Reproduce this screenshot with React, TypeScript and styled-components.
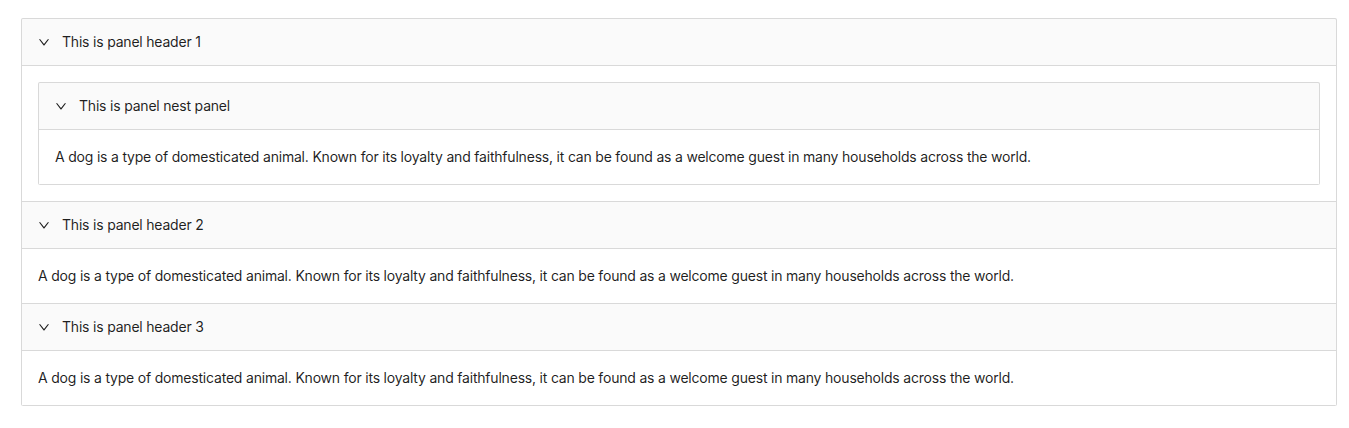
import React from "react";
import styled, { createGlobalStyle } from "styled-components";

const GlobalStyle = createGlobalStyle`
  html, body { margin: 0; padding: 0; background: #ffffff; }
  body {
    font-family: Inter, "Noto Sans", "Liberation Sans", sans-serif;
    font-size: 14px;
    line-height: 22px;
    letter-spacing: -0.2px;
    color: rgba(0, 0, 0, 0.88);
  }
`;

const Page = styled.div`
  padding: 18px 12px 0 21px;
`;

const Collapse = styled.div`
  border: 1px solid #d9d9d9;
  border-bottom: 0;
  border-radius: 2px;
  background: rgba(0, 0, 0, 0.02);
  overflow: hidden;
`;

const Item = styled.div`
  border-bottom: 1px solid #d9d9d9;
`;

const Header = styled.div`
  display: flex;
  align-items: flex-start;
  padding: 12px 16px;
  line-height: 22px;
  color: rgba(0, 0, 0, 0.88);
  cursor: pointer;
`;

const IconWrap = styled.span`
  display: flex;
  align-items: center;
  height: 22px;
  margin-right: 12px;
  font-size: 12px;
`;

const HeaderText = styled.span`
  flex: auto;
`;

const Content = styled.div`
  background: #ffffff;
  border-top: 1px solid #d9d9d9;
  padding: 16px;
`;

const Arrow = () => (
  <svg
    viewBox="64 64 896 896"
    width="12"
    height="12"
    fill="currentColor"
    style={{ transform: "rotate(90deg)" }}
  >
    <path d="M765.7 486.8L314.9 134.7A7.97 7.97 0 00302 141v77.3c0 4.9 2.3 9.6 6.1 12.6l360 281.1-360 281.1c-3.9 3-6.1 7.7-6.1 12.6V883c0 6.7 7.7 10.4 12.9 6.3l450.8-352.1a31.96 31.96 0 000-50.4z" />
  </svg>
);

const text =
  "A dog is a type of domesticated animal. Known for its loyalty and faithfulness, it can be found as a welcome guest in many households across the world.";

const Panel: React.FC<{ header: string; children: React.ReactNode }> = ({ header, children }) => (
  <Item>
    <Header>
      <IconWrap>
        <Arrow />
      </IconWrap>
      <HeaderText>{header}</HeaderText>
    </Header>
    <Content>{children}</Content>
  </Item>
);

export default function App() {
  return (
    <>
      <GlobalStyle />
      <Page>
        <Collapse>
          <Panel header="This is panel header 1">
            <Collapse>
              <Panel header="This is panel nest panel">{text}</Panel>
            </Collapse>
          </Panel>
          <Panel header="This is panel header 2">{text}</Panel>
          <Panel header="This is panel header 3">{text}</Panel>
        </Collapse>
      </Page>
    </>
  );
}
